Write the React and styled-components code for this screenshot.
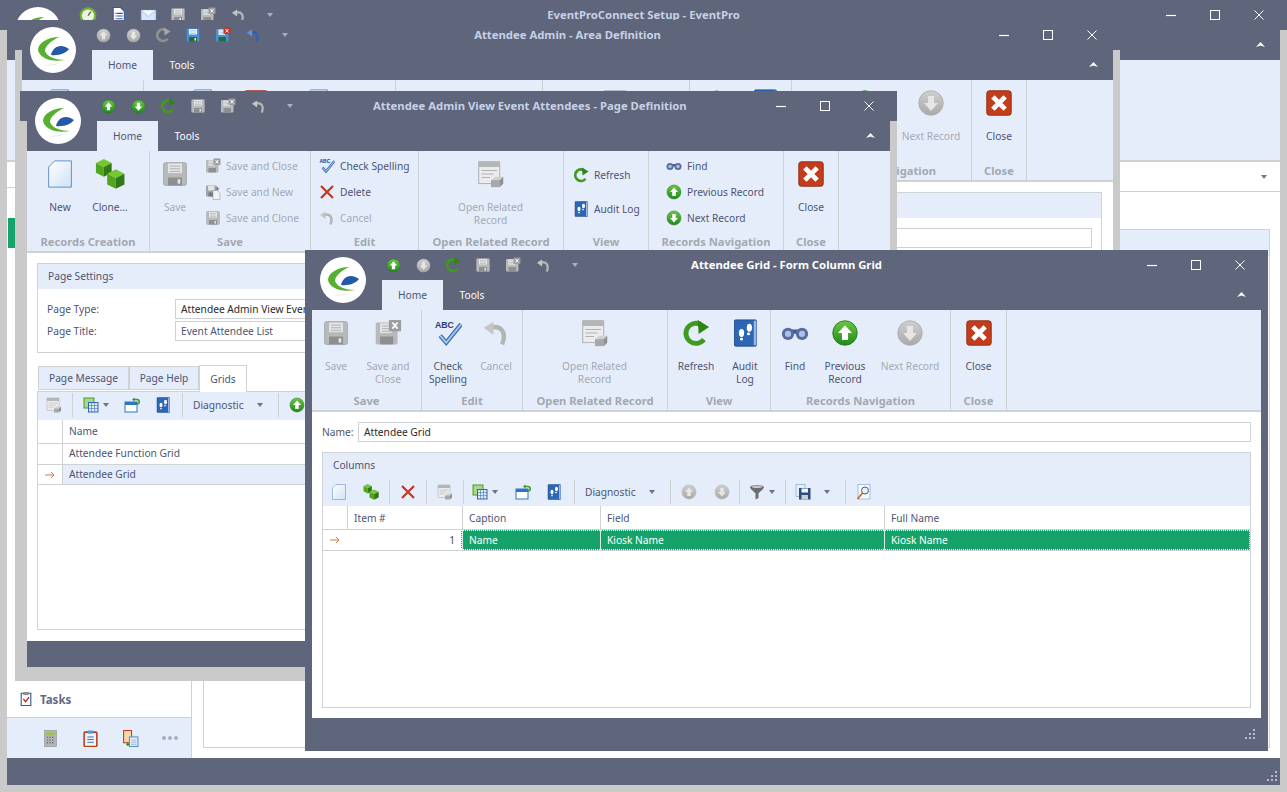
import React from 'react'
import styled, { createGlobalStyle } from 'styled-components'

const SLATE = '#5f657b'
const RIBBON = '#e5edfa'
const LINE = '#cfd2d5'
const BEZEL = '#c9cac9'
const TEXT = '#4d5472'
const OFF = '#a3a9b5'
const GREEN = '#16a26b'

const GlobalStyle = createGlobalStyle`
  html, body { margin: 0; padding: 0; background: ${BEZEL}; }
  * { box-sizing: border-box; }
  svg { display: block; flex: none; }
  body { font-family: "Noto Sans", "Open Sans", sans-serif; font-size: 10.2px; color: ${TEXT}; }
`

/* icons */
const Svg = ({ s = 16, children }) => (
  <svg width={s} height={s} viewBox="0 0 32 32">{children}</svg>
)

const Floppy = ({ s, color }) => {
  const body = color ? '#4f90d2' : '#b8b9ba'
  const label = color ? '#eef5fb' : '#e4e5e6'
  const foot = color ? '#1f6d3c' : '#8e8f90'
  return (
    <Svg s={s}>
      <rect x="3" y="3" width="26" height="26" rx="2" fill={body} stroke={color ? '#3b73ad' : '#a4a5a6'} />
      <rect x="8" y="4" width="16" height="11" fill={label} />
      <path d="M10 7h12M10 10h12M10 13h12" stroke={color ? '#8fb5dc' : '#a9aaab'} />
      <rect x="8" y="20" width="16" height="9" fill={foot} />
      <rect x="19" y="22" width="3" height="5" fill={label} />
    </Svg>
  )
}

const FloppyX = ({ s, color }) => {
  const body = color ? '#4f90d2' : '#b8b9ba'
  const foot = color ? '#1f6d3c' : '#8e8f90'
  return (
    <Svg s={s}>
      <rect x="2" y="4" width="25" height="25" rx="2" fill={body} />
      <rect x="7" y="5" width="13" height="11" fill={color ? '#eef5fb' : '#e4e5e6'} />
      <path d="M9 8h9M9 11h9M9 14h9" stroke={color ? '#8fb5dc' : '#a9aaab'} />
      <rect x="7" y="20" width="15" height="9" fill={foot} />
      <rect x="17" y="1" width="14" height="13" rx="1" fill={color ? '#c8321e' : '#9b9c9e'} />
      <path d="M21 4l6 7M27 4l-6 7" stroke="#fff" strokeWidth="2" />
    </Svg>
  )
}

const FloppyNew = ({ s }) => (
  <Svg s={s}>
    <rect x="2" y="3" width="22" height="22" rx="2" fill="#a3a4a5" />
    <rect x="6" y="4" width="13" height="9" fill="#e4e5e6" />
    <rect x="7" y="17" width="12" height="8" fill="#77787a" />
    <path d="M16 13h9l5 5v13H16z" fill="#f1f2f3" stroke="#8c8d8f" />
    <path d="M25 6v7M21.500 9.500h7" stroke="#77787a" strokeWidth="2" />
  </Svg>
)

const Ball = ({ s, down, off }) => {
  const id = off ? 'ballOff' : 'ballOn'
  return (
    <Svg s={s}>
      <defs>
        <linearGradient id={id} x1="0" y1="0" x2="0" y2="1">
          <stop offset="0" stopColor={off ? '#cfcfcf' : '#6cc644'} />
          <stop offset="1" stopColor={off ? '#a9a9a9' : '#1f8a1c'} />
        </linearGradient>
      </defs>
      <circle cx="16" cy="16" r="14" fill={`url(#${id})`} stroke={off ? '#acacac' : '#237a1d'} />
      <path
        d={down ? 'M16 25l8-9h-4.500V8h-7v8H8z' : 'M16 7l8 9h-4.500v8h-7v-8H8z'}
        fill={off ? '#e6e6e6' : '#fff'}
      />
    </Svg>
  )
}

const Refresh = ({ s, off }) => {
  const c = off ? '#8f8f8f' : '#3f9a1e'
  return (
    <Svg s={s}>
      <path d="M25 23.500A11.500 11.500 0 1 1 21 6" fill="none" stroke={c} strokeWidth="5.500" />
      <path d="M18 1l13 8-12 8z" fill={off ? '#a6a6a6' : '#2f8416'} />
    </Svg>
  )
}

const Undo = ({ s, color }) => {
  const c = color ? '#2f5fb0' : '#b3b4b5'
  return (
    <Svg s={s}>
      <path d="M10 10C20 7 29 13 23 29" fill="none" stroke={c} strokeWidth="5" />
      <path d="M2 10l11-7v15z" fill={color ? '#5d97dc' : '#c4c5c6'} />
    </Svg>
  )
}

const NewPage = ({ s }) => (
  <Svg s={s}>
    <defs>
      <linearGradient id="pageFill" x1="0" y1="0" x2="1" y2="1">
        <stop offset="0" stopColor="#ffffff" />
        <stop offset="1" stopColor="#cfe1f6" />
      </linearGradient>
    </defs>
    <path d="M10 1h19v30H3V8z" fill="url(#pageFill)" stroke="#4f86c6" />
  </Svg>
)

const Cube = ({ x, y, k }) => (
  <g transform={`translate(${x} ${y}) scale(${k})`}>
    <path d="M0 4l8-4 8 4-8 4z" fill="#74c832" />
    <path d="M0 4l8 4v10l-8-4z" fill="#52a521" />
    <path d="M16 4l-8 4v10l8-4z" fill="#2f7a14" />
  </g>
)

const Cubes = ({ s }) => (
  <Svg s={s}>
    <Cube x={1} y={0} k={1.05} />
    <Cube x={13} y={11} k={1.15} />
  </Svg>
)

const Spell = ({ s }) => (
  <Svg s={s}>
    <text x="1" y="10" fontSize="10" fontWeight="700" fontFamily="Liberation Sans" fill="#2c3a78">ABC</text>
    <path d="M7 19l7 8L31 6" fill="none" stroke="#3f70b5" strokeWidth="5" />
    <path d="M7 19l7 8L31 6" fill="none" stroke="#a9cbef" strokeWidth="2" />
  </Svg>
)

const RedX = ({ s }) => (
  <Svg s={s}>
    <path d="M4 4l24 24M28 4L4 28" stroke="#c23a22" strokeWidth="4.500" />
  </Svg>
)

const Related = ({ s }) => (
  <Svg s={s}>
    <rect x="2" y="2" width="24" height="25" fill="#ececec" stroke="#a7a8a9" />
    <rect x="2" y="2" width="24" height="6" fill="#b5b6b7" />
    <path d="M5 12h18M5 16h14M5 20h10" stroke="#a7a8a9" />
    <path d="M16 23l5-4h9l-4 4z" fill="#cfd0d1" />
    <rect x="16" y="23" width="10" height="8" fill="#a7a8a9" />
    <path d="M26 23l4-4v8l-4 4z" fill="#8f9091" />
  </Svg>
)

const Audit = ({ s }) => (
  <Svg s={s}>
    <rect x="4" y="1" width="25" height="30" rx="1" fill="#2e66b6" stroke="#1d4a8f" />
    <rect x="26" y="2" width="3" height="28" fill="#9db9df" />
    <ellipse cx="21" cy="10" rx="3" ry="4.500" fill="#fff" />
    <ellipse cx="12" cy="16" rx="3" ry="4.500" fill="#fff" />
    <circle cx="20" cy="17" r="1.700" fill="#fff" />
    <circle cx="12" cy="23" r="1.700" fill="#fff" />
  </Svg>
)

const Binoculars = ({ s }) => (
  <Svg s={s}>
    <rect x="12" y="12" width="8" height="5" fill="#4c5a88" />
    <circle cx="8" cy="17" r="7" fill="#5a6b9f" />
    <circle cx="24" cy="17" r="7" fill="#5a6b9f" />
    <circle cx="8" cy="17" r="3.500" fill="#a9c2e6" />
    <circle cx="24" cy="17" r="3.500" fill="#a9c2e6" />
  </Svg>
)

const CloseBox = ({ s }) => (
  <Svg s={s}>
    <rect x="2" y="2" width="28" height="28" rx="3" fill="#c23d1d" stroke="#8e2b12" />
    <path d="M9 9l14 14M23 9L9 23" stroke="#fff" strokeWidth="5.500" />
  </Svg>
)

const GridPick = ({ s }) => (
  <Svg s={s}>
    <rect x="2" y="2" width="20" height="20" fill="#a9d78c" stroke="#4c9a2a" strokeWidth="2" />
    <rect x="11" y="11" width="19" height="19" fill="#dbe8f8" stroke="#2e66b6" strokeWidth="2" />
    <path d="M11 17h19M11 23h19M17 11v19M23 11v19" stroke="#2e66b6" />
  </Svg>
)

const WinArrow = ({ s }) => (
  <Svg s={s}>
    <rect x="2" y="10" width="24" height="20" fill="#fff" stroke="#2e74c4" strokeWidth="2" />
    <rect x="2" y="10" width="24" height="6" fill="#2e74c4" />
    <path d="M18 5h8a4 4 0 0 1 0 9" fill="none" stroke="#3f9a1e" strokeWidth="3" />
    <path d="M21 1l-5 4 5 4z" fill="#3f9a1e" />
  </Svg>
)

const Funnel = ({ s }) => (
  <Svg s={s}>
    <ellipse cx="16" cy="6" rx="14" ry="4" fill="#8b8c8e" />
    <path d="M2 6c2 7 9 9 11 13v12l6-3v-9c2-4 9-6 11-13z" fill="#6d6e71" />
    <ellipse cx="16" cy="6" rx="10" ry="2" fill="#c8c9ca" />
  </Svg>
)

const FloppyDark = ({ s }) => (
  <Svg s={s}>
    <rect x="2" y="1" width="18" height="24" fill="#e4eefa" stroke="#5d8fca" />
    <rect x="8" y="8" width="23" height="23" fill="#2f4a7c" />
    <rect x="13" y="9" width="13" height="8" fill="#f3f6fb" />
    <rect x="13" y="22" width="13" height="9" fill="#c5cedd" />
  </Svg>
)

const SearchPage = ({ s }) => (
  <Svg s={s}>
    <rect x="4" y="1" width="24" height="29" fill="#f5f8fd" stroke="#5d8fca" />
    <circle cx="18" cy="13" r="7" fill="#e6eef9" stroke="#5a5b5d" strokeWidth="2" />
    <path d="M13 18L3 30" stroke="#c76a22" strokeWidth="3.500" />
  </Svg>
)

const Clock = ({ s }) => (
  <Svg s={s}>
    <circle cx="16" cy="17" r="13" fill="#eaf4dc" stroke="#6fae2e" strokeWidth="4" />
    <path d="M16 17l5-7" stroke="#5a6a5a" strokeWidth="2.500" />
  </Svg>
)

const DocList = ({ s }) => (
  <Svg s={s}>
    <path d="M6 1h14l7 7v23H6z" fill="#fff" stroke="#2f57a8" strokeWidth="2" />
    <path d="M12 12h12M12 17h12M12 22h12M12 27h12" stroke="#2f57a8" strokeWidth="2" />
    <path d="M9 12h1.500M9 17h1.500M9 22h1.500M9 27h1.500" stroke="#c8321e" strokeWidth="2" />
  </Svg>
)

const Mail = ({ s }) => (
  <Svg s={s}>
    <rect x="2" y="6" width="28" height="20" fill="#d4e6fa" stroke="#7aa8db" />
    <path d="M2 6l14 12L30 6" fill="#f1f7fe" stroke="#7aa8db" />
  </Svg>
)

const Calc = ({ s }) => (
  <Svg s={s}>
    <rect x="5" y="1" width="22" height="30" fill="#b4b5b7" stroke="#808184" />
    <rect x="8" y="4" width="16" height="6" fill="#9fc15a" />
    <path d="M9 14h14M9 19h14M9 24h14" stroke="#6d6e71" strokeWidth="2.500" strokeDasharray="2.500 2.500" />
  </Svg>
)

const Clip = ({ s }) => (
  <Svg s={s}>
    <rect x="4" y="4" width="24" height="27" rx="2" fill="#f0f5fc" stroke="#b8401f" strokeWidth="3" />
    <rect x="11" y="1" width="10" height="6" fill="#5d97dc" />
    <path d="M10 13h12M10 18h12M10 23h12" stroke="#2e74c4" strokeWidth="2" />
  </Svg>
)

const Docs = ({ s }) => (
  <Svg s={s}>
    <rect x="3" y="1" width="15" height="23" fill="#f7d9a8" stroke="#b8401f" strokeWidth="2" />
    <rect x="14" y="13" width="16" height="18" fill="#e4eefa" stroke="#5d8fca" strokeWidth="2" />
    <path d="M17 19h10M17 23h10M17 27h10" stroke="#5d8fca" />
    <path d="M8 27h6M11 24v6" stroke="#2c8a1e" strokeWidth="2.500" />
  </Svg>
)

const TaskClip = ({ s }) => (
  <Svg s={s}>
    <rect x="5" y="3" width="22" height="28" fill="#fff" stroke="#35568f" strokeWidth="2.500" />
    <rect x="10" y="0" width="12" height="7" fill="#8f9091" />
    <path d="M10 16l5 6 8-10" fill="none" stroke="#c0281e" strokeWidth="3" />
  </Svg>
)

const Logo = () => (
  <svg width="46" height="46" viewBox="0 0 46 46">
    <circle cx="23" cy="23" r="23" fill="#fff" />
    <path d="M29 10C18 10 8 16 8 23c1 7 12 13 27 10-9 0-18-3-20-9 0-5 6-10 14-14z" fill="#57b030" />
    <path d="M21 28c1-7 9-13 18-6-3 4-10 7-18 6z" fill="#2458a8" />
    <path d="M13 38c8 1 13 0 17-2-5 1-11 2-17 2z" fill="#dfe6df" />
  </svg>
)

const Caret = styled.span`
  flex: none;
  width: 0;
  height: 0;
  margin-left: ${p => p.$gap ?? 4}px;
  border-left: 3.5px solid transparent;
  border-right: 3.5px solid transparent;
  border-top: 4px solid ${p => p.$color || '#6d7386'};
`

/* window frame */
const Desktop = styled.div`
  position: relative;
  width: 1287px;
  height: 792px;
  overflow: hidden;
  background: ${BEZEL};
`

const Win = styled.section`
  position: absolute;
  isolation: isolate;
  left: ${p => p.$x}px;
  top: ${p => p.$y}px;
  width: ${p => p.$w}px;
  height: ${p => p.$h}px;
  display: flex;
  flex-direction: column;
  background: ${p => (p.$active ? SLATE : BEZEL)};
`

const TitleBar = styled.header`
  flex: none;
  height: 30px;
  display: grid;
  grid-template-columns: 1fr auto 1fr;
  align-items: center;
  background: ${SLATE};
`

const Qat = styled.div`
  display: flex;
  align-items: center;
  padding-left: 73px;
`

const QatSlot = styled.span`
  width: 30px;
  display: flex;
  align-items: center;
  justify-content: center;
`

const Title = styled.div`
  padding-left: ${p => p.$shift || 0}px;
  padding-bottom: 2px;
  font-weight: 700;
  font-size: 11.3px;
  white-space: nowrap;
  color: ${p => (p.$active ? '#ffffff' : '#c6d1e6')};
`

const Controls = styled.div`
  display: flex;
  justify-content: flex-end;
  padding-right: 6px;
`

const Ctrl = styled.span`
  width: 44px;
  display: flex;
  justify-content: center;
`

const Inner = styled.div`
  flex: 1;
  min-height: 0;
  display: flex;
  flex-direction: column;
  margin: ${p => (p.$active ? '0' : '0 7px 7px')};
  padding: ${p => (p.$active ? '0 7px' : '0')};
  background: ${SLATE};
`

const TabRow = styled.div`
  flex: none;
  height: 30px;
  display: flex;
  padding-left: 70px;
  align-items: stretch;
  position: relative;
`

const RibbonTab = styled.div`
  width: ${p => (p.$on ? 61 : 58)}px;
  display: flex;
  align-items: center;
  justify-content: center;
  padding-bottom: 1px;
  background: ${p => (p.$on ? RIBBON : 'transparent')};
  color: ${p => (p.$on ? TEXT : '#ffffff')};
`

const Collapse = styled.svg`
  margin: 12px 15px 0 auto;
  width: 9px;
  height: 6px;
`

const LogoSpot = styled.div`
  position: absolute;
  left: 15px;
  top: 7px;
  z-index: 3;
`

const Footer = styled.div`
  flex: none;
  height: ${p => p.$h}px;
  position: relative;
  background: ${SLATE};
`

const Grip = styled.svg`
  position: absolute;
  right: ${p => p.$r}px;
  top: ${p => p.$t}px;
  width: 10px;
  height: 10px;
`

const Dots = ({ r, t }) => (
  <Grip $r={r} $t={t} viewBox="0 0 10 10">
    <g fill="#b5bdd0">
      <rect x="8" y="0" width="2" height="2" />
      <rect x="4" y="4" width="2" height="2" />
      <rect x="8" y="4" width="2" height="2" />
      <rect x="0" y="8" width="2" height="2" />
      <rect x="4" y="8" width="2" height="2" />
      <rect x="8" y="8" width="2" height="2" />
    </g>
  </Grip>
)

const Window = ({ x, y, w, h, active, title, shift, qat, ribbon, foot, children, grip }) => (
  <Win $x={x} $y={y} $w={w} $h={h} $active={active}>
    <LogoSpot><Logo /></LogoSpot>
    <TitleBar>
      <Qat>
        {qat.map((q, i) => <QatSlot key={i}>{q}</QatSlot>)}
        <QatSlot><Caret $gap={4} $color="#a9afc0" /></QatSlot>
      </Qat>
      <Title $active={active} $shift={shift}>{title}</Title>
      <Controls>
        <Ctrl>
          <svg width="10" height="10" viewBox="0 0 10 10"><path d="M0 5.500h10" stroke="#fff" strokeWidth="1.200" /></svg>
        </Ctrl>
        <Ctrl>
          <svg width="10" height="10" viewBox="0 0 10 10"><rect x=".5" y=".5" width="9" height="9" fill="none" stroke="#fff" /></svg>
        </Ctrl>
        <Ctrl>
          <svg width="10" height="10" viewBox="0 0 10 10"><path d="M.5.5l9 9M9.500.5l-9 9" stroke="#fff" /></svg>
        </Ctrl>
      </Controls>
    </TitleBar>
    <Inner $active={active}>
      <TabRow>
        <RibbonTab $on>Home</RibbonTab>
        <RibbonTab>Tools</RibbonTab>
        <Collapse viewBox="0 0 9 6"><path d="M4.500 0L9 5 4.500 3.500 0 5z" fill="#fff" /></Collapse>
      </TabRow>
      <Ribbon>{ribbon}</Ribbon>
      {children}
      <Footer $h={foot}>{grip && <Dots r={grip[0]} t={grip[1]} />}</Footer>
    </Inner>
  </Win>
)

/* ribbon */
const Ribbon = styled.div`
  flex: none;
  height: 102px;
  display: flex;
  background: ${RIBBON};
  border-bottom: 2px solid ${LINE};
`

const GroupBox = styled.div`
  flex: none;
  width: ${p => p.$w}px;
  display: flex;
  flex-direction: column;
  border-right: 1px solid ${LINE};
`

const GroupBody = styled.div`
  flex: none;
  height: 82px;
  display: flex;
  padding-left: ${p => p.$pad || 0}px;
`

const GroupLabel = styled.div`
  height: 18px;
  line-height: 18px;
  text-align: center;
  font-size: 11.2px;
  font-weight: 700;
  white-space: nowrap;
  color: #a3a8b1;
`

const Group = ({ w, label, pad, children }) => (
  <GroupBox $w={w}>
    <GroupBody $pad={pad}>{children}</GroupBody>
    <GroupLabel>{label}</GroupLabel>
  </GroupBox>
)

const BigButton = styled.div`
  flex: none;
  width: ${p => p.$w}px;
  display: flex;
  flex-direction: column;
  align-items: center;
  padding-top: 9px;
  line-height: 13px;
  text-align: center;
  color: ${p => (p.$off ? OFF : TEXT)};
`

const BigIcon = styled.div`
  height: 28px;
  margin-bottom: 13px;
  display: flex;
  align-items: center;
`

const Big = ({ w, off, icon, children }) => (
  <BigButton $w={w} $off={off}>
    <BigIcon>{icon}</BigIcon>
    <div>{children}</div>
  </BigButton>
)

const Stack = styled.div`
  display: flex;
  flex-direction: column;
  gap: ${p => p.$gap || 0}px;
  padding-top: ${p => p.$top ?? 2}px;
  margin-left: ${p => p.$left || 0}px;
`

const SmallButton = styled.div`
  height: 26px;
  display: flex;
  align-items: center;
  gap: 5px;
  white-space: nowrap;
  color: ${p => (p.$off ? OFF : TEXT)};
`

const Small = ({ off, icon, children }) => (
  <SmallButton $off={off}>{icon}<span>{children}</span></SmallButton>
)

/* form parts */
const Content = styled.div`
  flex: 1;
  min-height: 0;
  display: flex;
  flex-direction: column;
  background: #fff;
  padding: ${p => p.$pad || '10px'};
`

const FieldBox = styled.div`
  flex: none;
  height: 90px;
  border: 1px solid ${LINE};
  background: #fff;
`

const BoxHead = styled.div`
  height: 25px;
  line-height: 25px;
  padding-left: 10px;
  background: ${RIBBON};
`

const FieldRows = styled.div`
  display: flex;
  flex-direction: column;
  gap: 2px;
  padding: 10px 9px 0;
`

const FieldRow = styled.label`
  display: flex;
  align-items: center;
  height: 20px;
`

const FieldName = styled.span`
  flex: none;
  width: ${p => p.$w}px;
`

const TextBox = styled.div`
  flex: 1;
  height: 20px;
  line-height: 18px;
  padding-left: 5px;
  white-space: nowrap;
  overflow: hidden;
  border: 1px solid ${LINE};
  color: ${p => (p.$dark ? '#26282e' : TEXT)};
`

const Tabs = styled.div`
  flex: none;
  display: flex;
  align-items: flex-end;
  height: 27px;
  margin-top: 11px;
  padding-left: 1px;
`

const PageTab = styled.div`
  width: ${p => p.$w}px;
  height: ${p => (p.$on ? 27 : 24)}px;
  display: flex;
  align-items: center;
  justify-content: center;
  padding-bottom: 1px;
  margin-bottom: ${p => (p.$on ? -1 : 1)}px;
  position: relative;
  background: ${p => (p.$on ? '#fff' : RIBBON)};
  border: 1px solid ${LINE};
  border-bottom: ${p => (p.$on ? 'none' : `1px solid ${LINE}`)};
`

const Panel = styled.div`
  flex: 1;
  min-height: 0;
  border: 1px solid ${LINE};
  background: #fff;
`

const Toolbar = styled.div`
  height: ${p => p.$h}px;
  padding-bottom: 2px;
  display: flex;
  align-items: center;
  background: ${RIBBON};
`

const ToolItem = styled.div`
  flex: none;
  width: ${p => p.$w}px;
  display: flex;
  align-items: center;
  justify-content: ${p => (p.$pad === undefined ? 'center' : 'flex-start')};
  padding-left: ${p => p.$pad || 0}px;
`

const Sep = styled.div`
  flex: none;
  width: 4px;
  height: 24px;
  display: flex;
  justify-content: center;
  &::before {
    content: '';
    width: 1px;
    background: ${LINE};
  }
`

const Spring = styled.span`
  flex: 1;
`

const GridRow = styled.div`
  display: grid;
  grid-template-columns: ${p => p.$cols};
  height: ${p => p.$h}px;
  line-height: ${p => p.$lh || p.$h - 1}px;
  border-bottom: 1px solid ${LINE};
`

const Cell = styled.div`
  padding-left: 6px;
  white-space: nowrap;
  overflow: hidden;
  border-left: 1px solid ${LINE};
  background: ${p => (p.$pick ? RIBBON : 'transparent')};
`

const Indicator = styled.div`
  display: flex;
  align-items: center;
  justify-content: center;
`

const RowMark = () => (
  <svg width="10" height="8" viewBox="0 0 10 8">
    <path d="M0 4h9M6 1l3 3-3 3" fill="none" stroke="#e0764a" />
  </svg>
)

const NameRow = styled.label`
  flex: none;
  height: 20px;
  display: flex;
  align-items: center;
`

const Columns = styled.div`
  flex: 1;
  min-height: 0;
  margin-top: 10px;
  border: 1px solid ${LINE};
  display: flex;
  flex-direction: column;
`

const ColumnsHead = styled.div`
  flex: none;
  height: 27px;
  line-height: 25px;
  padding-left: 10px;
  background: ${RIBBON};
`

const PickRow = styled.div`
  display: grid;
  grid-template-columns: ${p => p.$cols};
  height: 21px;
  line-height: 20px;
  color: #fff;
  border-bottom: 1px solid ${LINE};
`

const PickInner = styled.div`
  display: grid;
  grid-template-columns: 115px 138px 284px 1fr;
  background: ${GREEN};
  outline: 1px dotted #fff;
  outline-offset: -1px;
`

const PickCell = styled.div`
  padding-left: 6px;
  border-left: 1px solid #dbeee6;
`

const FocusCell = styled.div`
  border: 1px dotted ${GREEN};
  background: #fff;
  color: #4a4a4a;
  line-height: 18px;
  text-align: right;
  padding-right: 6px;
`

/* main window parts */
const MainBody = styled.div`
  flex: 1;
  min-height: 0;
  display: flex;
  background: #fff;
`

const Sidebar = styled.aside`
  flex: none;
  width: 185px;
  display: flex;
  flex-direction: column;
  border-right: 1px solid ${LINE};
`

const SideHead = styled.div`
  height: 26px;
  border-bottom: 1px solid ${LINE};
`

const SideRow = styled.div`
  height: 30px;
  margin-left: 1px;
  background: ${p => (p.$on ? GREEN : 'transparent')};
`

const Tasks = styled.div`
  height: 38px;
  display: flex;
  align-items: center;
  gap: 7px;
  padding: 1px 0 0 12px;
  font-weight: 700;
  font-size: 11.5px;
  color: #616a82;
  border-bottom: 1px solid ${LINE};
`

const Strip = styled.div`
  height: 40px;
  display: grid;
  grid-template-columns: repeat(4, 40px);
  padding-left: 23px;
  align-items: center;
  justify-items: center;
  background: ${RIBBON};
`

const StripDots = styled.span`
  display: flex;
  gap: 2px;
  & > i {
    width: 4px;
    height: 4px;
    border-radius: 50%;
    background: #a8aec0;
  }
`

const MainPane = styled.div`
  flex: 1;
  min-width: 0;
  display: flex;
  flex-direction: column;
`

const FilterBar = styled.div`
  flex: none;
  height: 30px;
  display: flex;
  align-items: center;
  justify-content: flex-end;
  padding-right: 13px;
  border-bottom: 1px solid ${LINE};
`

const MainBox = styled.div`
  flex: 1;
  margin: 37px 10px 10px 11px;
  border: 1px solid ${LINE};
  display: flex;
  flex-direction: column;
`

const MainBoxHead = styled.div`
  height: 26px;
  background: ${RIBBON};
`

const MainBoxRows = styled.div`
  flex: 1;
  background: repeating-linear-gradient(to bottom, #fff 0 20.5px, #eceded 20.5px 21.5px) right / 2px 100% no-repeat;
`

export default function App() {
  const gridCols = '24px 1fr'
  const formCols = '24px 115px 138px 284px 1fr'
  return (
    <Desktop>
      <GlobalStyle />

      <Window
        x={0} y={0} w={1287} h={792} foot={27} grip={[3, 13]}
        title="EventProConnect Setup - EventPro"
        qat={[<Clock s={18} />, <DocList s={17} />, <Mail s={17} />, <Floppy s={16} />, <FloppyX s={16} />, <Undo s={15} />]}
        ribbon={null}
      >
        <MainBody>
          <Sidebar>
            <SideHead />
            <SideRow />
            <SideRow $on />
            <Spring />
            <Tasks><TaskClip s={14} />Tasks</Tasks>
            <Strip>
              <Calc s={17} />
              <Clip s={17} />
              <Docs s={17} />
              <StripDots><i /><i /><i /></StripDots>
            </Strip>
          </Sidebar>
          <MainPane>
            <FilterBar><Caret $color="#777" /></FilterBar>
            <MainBox>
              <MainBoxHead />
              <MainBoxRows />
            </MainBox>
          </MainPane>
        </MainBody>
      </Window>

      <Window
        x={15} y={20} w={1105} h={661} foot={26}
        title="Attendee Admin - Area Definition"
        qat={[<Ball s={15} off />, <Ball s={15} off down />, <Refresh s={16} off />, <Floppy s={16} color />, <FloppyX s={16} color />, <Undo s={15} color />]}
        ribbon={
          <>
            <Group w={122}>
              <Big w={70} icon={<NewPage s={28} />} />
              <Big w={50} icon={<Floppy s={28} />} />
            </Group>
            <Group w={252}>
              <Big w={30} />
              <Big w={52} icon={<NewPage s={28} />} />
              <Big w={60} icon={<CloseBox s={28} />} />
              <Big w={60} icon={<NewPage s={28} />} />
              <Big w={50} icon={<Floppy s={28} color />} />
            </Group>
            <Group w={147}>
              <Big w={50} icon={<Spell s={28} />} />
              <Big w={50} off icon={<RedX s={28} />} />
              <Big w={40} off icon={<Undo s={28} />} />
            </Group>
            <Group w={147}>
              <Big w={147} off icon={<Related s={28} />} />
            </Group>
            <Group w={102}>
              <Big w={50} icon={<Refresh s={28} />} />
              <Big w={50} icon={<Audit s={28} />} />
            </Group>
            <Group w={180} label="Records Navigation">
              <Big w={46} icon={<Binoculars s={28} />} />
              <Big w={54} icon={<Ball s={28} />} />
              <Big w={78} off icon={<Ball s={28} off down />}>Next Record</Big>
            </Group>
            <Group w={55} label="Close">
              <Big w={54} icon={<CloseBox s={28} />}>Close</Big>
            </Group>
          </>
        }
      >
        <Content $pad="10px 11px 10px 4px">
          <FieldBox>
            <BoxHead />
            <FieldRows>
              <FieldRow>
                <TextBox />
              </FieldRow>
            </FieldRows>
          </FieldBox>
        </Content>
      </Window>

      <Window
        x={20} y={91} w={877} h={583} foot={26} shift={70}
        title="Attendee Admin View Event Attendees - Page Definition"
        qat={[<Ball s={15} />, <Ball s={15} down />, <Refresh s={16} />, <Floppy s={16} />, <FloppyX s={16} />, <Undo s={15} />]}
        ribbon={
          <>
            <Group w={123} label="Records Creation" pad={3}>
              <Big w={60} icon={<NewPage s={28} />}>New</Big>
              <Big w={40} icon={<Cubes s={30} />}>Clone...</Big>
            </Group>
            <Group w={161} label="Save">
              <Big w={50} off icon={<Floppy s={28} />}>Save</Big>
              <Stack $left={5}>
                <Small off icon={<FloppyX s={16} />}>Save and Close</Small>
                <Small off icon={<FloppyNew s={16} />}>Save and New</Small>
                <Small off icon={<Floppy s={16} />}>Save and Clone</Small>
              </Stack>
            </Group>
            <Group w={108} label="Edit" pad={8}>
              <Stack>
                <Small icon={<Spell s={16} />}>Check Spelling</Small>
                <Small icon={<RedX s={16} />}>Delete</Small>
                <Small off icon={<Undo s={16} />}>Cancel</Small>
              </Stack>
            </Group>
            <Group w={145} label="Open Related Record">
              <Big w={143} off icon={<Related s={28} />}>Open Related<br />Record</Big>
            </Group>
            <Group w={85} label="View" pad={9}>
              <Stack $top={11} $gap={8}>
                <Small icon={<Refresh s={16} />}>Refresh</Small>
                <Small icon={<Audit s={16} />}>Audit Log</Small>
              </Stack>
            </Group>
            <Group w={135} label="Records Navigation" pad={17}>
              <Stack>
                <Small icon={<Binoculars s={16} />}>Find</Small>
                <Small icon={<Ball s={16} />}>Previous Record</Small>
                <Small icon={<Ball s={16} down />}>Next Record</Small>
              </Stack>
            </Group>
            <Group w={55} label="Close">
              <Big w={54} icon={<CloseBox s={28} />}>Close</Big>
            </Group>
          </>
        }
      >
        <Content $pad="10px 10px 11px">
          <FieldBox>
            <BoxHead>Page Settings</BoxHead>
            <FieldRows>
              <FieldRow>
                <FieldName $w={128}>Page Type:</FieldName>
                <TextBox $dark>Attendee Admin View Event Attendees</TextBox>
              </FieldRow>
              <FieldRow>
                <FieldName $w={128}>Page Title:</FieldName>
                <TextBox>Event Attendee List</TextBox>
              </FieldRow>
            </FieldRows>
          </FieldBox>
          <Tabs>
            <PageTab $w={91}>Page Message</PageTab>
            <PageTab $w={70}>Page Help</PageTab>
            <PageTab $w={48} $on>Grids</PageTab>
          </Tabs>
          <Panel>
            <Toolbar $h={28}>
              <ToolItem $w={32}><Related s={16} /></ToolItem>
              <Sep />
              <ToolItem $w={44} $pad={9}><GridPick s={16} /><Caret /></ToolItem>
              <ToolItem $w={28}><WinArrow s={16} /></ToolItem>
              <ToolItem $w={34}><Audit s={16} /></ToolItem>
              <Sep />
              <ToolItem $w={92} $pad={9}>Diagnostic<Spring /><Caret $gap={0} /><Spring /></ToolItem>
              <Sep />
              <ToolItem $w={34}><Ball s={16} /></ToolItem>
            </Toolbar>
            <GridRow $cols={gridCols} $h={24}>
              <Indicator />
              <Cell>Name</Cell>
            </GridRow>
            <GridRow $cols={gridCols} $h={21} $lh={19}>
              <Indicator />
              <Cell>Attendee Function Grid</Cell>
            </GridRow>
            <GridRow $cols={gridCols} $h={20}>
              <Indicator><RowMark /></Indicator>
              <Cell $pick>Attendee Grid</Cell>
            </GridRow>
          </Panel>
        </Content>
      </Window>

      <Window
        x={305} y={250} w={963} h={501} foot={33} active grip={[6, 11]}
        title="Attendee Grid - Form Column Grid"
        qat={[<Ball s={15} />, <Ball s={15} off down />, <Refresh s={16} />, <Floppy s={16} />, <FloppyX s={16} />, <Undo s={15} />]}
        ribbon={
          <>
            <Group w={110} label="Save">
              <Big w={48} off icon={<Floppy s={28} />}>Save</Big>
              <Big w={56} off icon={<FloppyX s={28} />}>Save and<br />Close</Big>
            </Group>
            <Group w={101} label="Edit">
              <Big w={52} icon={<Spell s={28} />}>Check<br />Spelling</Big>
              <Big w={44} off icon={<Undo s={28} />}>Cancel</Big>
            </Group>
            <Group w={145} label="Open Related Record">
              <Big w={143} off icon={<Related s={28} />}>Open Related<br />Record</Big>
            </Group>
            <Group w={103} label="View">
              <Big w={56} icon={<Refresh s={28} />}>Refresh</Big>
              <Big w={42} icon={<Audit s={28} />}>Audit<br />Log</Big>
            </Group>
            <Group w={180} label="Records Navigation">
              <Big w={48} icon={<Binoculars s={28} />}>Find</Big>
              <Big w={52} icon={<Ball s={28} />}>Previous<br />Record</Big>
              <Big w={78} off icon={<Ball s={28} off down />}>Next Record</Big>
            </Group>
            <Group w={56} label="Close">
              <Big w={55} icon={<CloseBox s={28} />}>Close</Big>
            </Group>
          </>
        }
      >
        <Content>
          <NameRow>
            <FieldName $w={36}>Name:</FieldName>
            <TextBox $dark>Attendee Grid</TextBox>
          </NameRow>
          <Columns>
            <ColumnsHead>Columns</ColumnsHead>
            <Toolbar $h={26}>
              <ToolItem $w={32}><NewPage s={16} /></ToolItem>
              <ToolItem $w={32}><Cubes s={16} /></ToolItem>
              <Sep />
              <ToolItem $w={33}><RedX s={16} /></ToolItem>
              <Sep />
              <ToolItem $w={33}><Related s={16} /></ToolItem>
              <Sep />
              <ToolItem $w={45} $pad={7}><GridPick s={16} /><Caret /></ToolItem>
              <ToolItem $w={26}><WinArrow s={16} /></ToolItem>
              <ToolItem $w={36}><Audit s={16} /></ToolItem>
              <Sep />
              <ToolItem $w={92} $pad={9}>Diagnostic<Spring /><Caret $gap={0} /><Spring /></ToolItem>
              <Sep />
              <ToolItem $w={34}><Ball s={16} off /></ToolItem>
              <ToolItem $w={31}><Ball s={16} off down /></ToolItem>
              <Sep />
              <ToolItem $w={42} $pad={8}><Funnel s={16} /><Caret /></ToolItem>
              <Sep />
              <ToolItem $w={56} $pad={8}><FloppyDark s={16} /><Caret $gap={13} /></ToolItem>
              <Sep />
              <ToolItem $w={34}><SearchPage s={16} /></ToolItem>
            </Toolbar>
            <GridRow $cols={formCols} $h={24} $lh={24}>
              <Indicator />
              <Cell>Item #</Cell>
              <Cell>Caption</Cell>
              <Cell>Field</Cell>
              <Cell>Full Name</Cell>
            </GridRow>
            <PickRow $cols={gridCols}>
              <Indicator><RowMark /></Indicator>
              <PickInner>
                <FocusCell>1</FocusCell>
                <PickCell>Name</PickCell>
                <PickCell>Kiosk Name</PickCell>
                <PickCell>Kiosk Name</PickCell>
              </PickInner>
            </PickRow>
          </Columns>
        </Content>
      </Window>
    </Desktop>
  )
}
